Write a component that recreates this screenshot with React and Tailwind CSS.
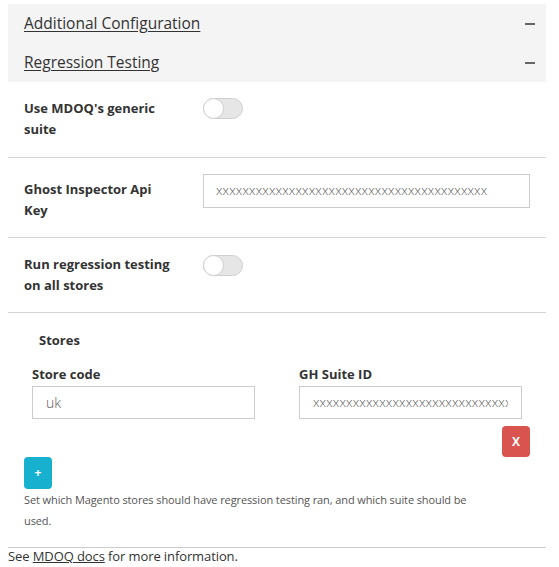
import React from "react";

function Toggle() {
  return (
    <div className="relative w-[40px] h-[21px] rounded-full bg-[#e6e6e6] border border-[#cfcfcf]">
      <div className="absolute left-[-1px] top-[-1px] w-[21px] h-[21px] rounded-full bg-white border border-[#cfcfcf]" />
    </div>
  );
}

function Row({ label, children, labelPad = "", pb = "pb-4" }) {
  return (
    <div className={"flex px-4 pt-4 border-b border-[#d4d4d4] " + pb}>
      <div className={"w-[179px] shrink-0 pr-2 whitespace-nowrap text-[13px] leading-[21px] font-bold text-[#333] " + labelPad}>
        {label}
      </div>
      <div className="flex-1">{children}</div>
    </div>
  );
}

export default function App() {
  const xs = "x".repeat(41);
  return (
    <div className="bg-white w-[559px] h-[567px] overflow-hidden font-['Open_Sans',sans-serif] text-[#333]">
      <div className="pl-2 pr-[13px] pt-1">
        <div className="bg-[#f4f4f4]">
          <div className="flex items-center justify-between pl-4 pr-[11px] h-[39px]">
            <span className="text-[15.5px] underline underline-offset-2 text-[#333]">Additional Configuration</span>
            <span className="block w-[10px] h-[2px] bg-[#666]" />
          </div>
          <div className="flex items-center justify-between pl-4 pr-[11px] h-[39px]">
            <span className="text-[15.5px] underline underline-offset-2 text-[#333]">Regression Testing</span>
            <span className="block w-[10px] h-[2px] bg-[#666]" />
          </div>
        </div>
        <Row label={<>Use MDOQ's generic<br />suite</>} pb="pb-[17px]">
          <Toggle />
        </Row>
        <Row label={<>Ghost Inspector Api<br />Key</>} labelPad="pt-[5px]">
          <div className="w-[327px] h-[34px] border border-[#ccc] flex items-center px-3 text-[13px] tracking-[0.15px] font-light text-[#555] overflow-hidden whitespace-nowrap">
            {xs}
          </div>
        </Row>
        <Row label={<>Run regression testing<br />on all stores</>}>
          <div className="pt-[1px]"><Toggle /></div>
        </Row>
        <div className="px-4 pt-[17px]">
          <div className="pl-[15px] text-[13px] font-bold leading-[21px]">Stores</div>
          <div className="flex gap-[44px] pl-2 pt-[13px]">
            <div className="w-[223px]">
              <div className="text-[13px] font-bold leading-[21px]">Store code</div>
              <div className="mt-[1px] h-[33px] border border-[#ccc] flex items-center px-[13px] text-[14px] font-light text-[#555]">uk</div>
            </div>
            <div className="w-[223px]">
              <div className="text-[13px] font-bold leading-[21px]">GH Suite ID</div>
              <div className="mt-[1px] h-[33px] border border-[#ccc] flex items-center px-[13px]">
                <div className="flex-1 overflow-hidden whitespace-nowrap text-[13px] tracking-[0.15px] font-light text-[#555]">{xs}</div>
              </div>
            </div>
          </div>
          <div className="flex justify-end pt-[7px]">
            <div className="w-[28px] h-[31px] rounded-[4px] bg-[#d9534f] text-white text-[12px] font-bold flex items-center justify-center">X</div>
          </div>
          <div className="w-[28px] h-[32px] rounded-[4px] bg-[#17b0cf] text-white text-[12px] font-bold flex items-center justify-center">+</div>
          <div className="text-[11px] tracking-[-0.1px] leading-[21px] text-[#555] pb-[16px] whitespace-nowrap">
            Set which Magento stores should have regression testing ran, and which suite should be<br />used.
          </div>
        </div>
        <div className="border-t border-[#ccc] text-[13px] tracking-[-0.1px] leading-[17px] text-[#333]">
          See <span className="underline">MDOQ docs</span> for more information.
        </div>
      </div>
    </div>
  );
}
